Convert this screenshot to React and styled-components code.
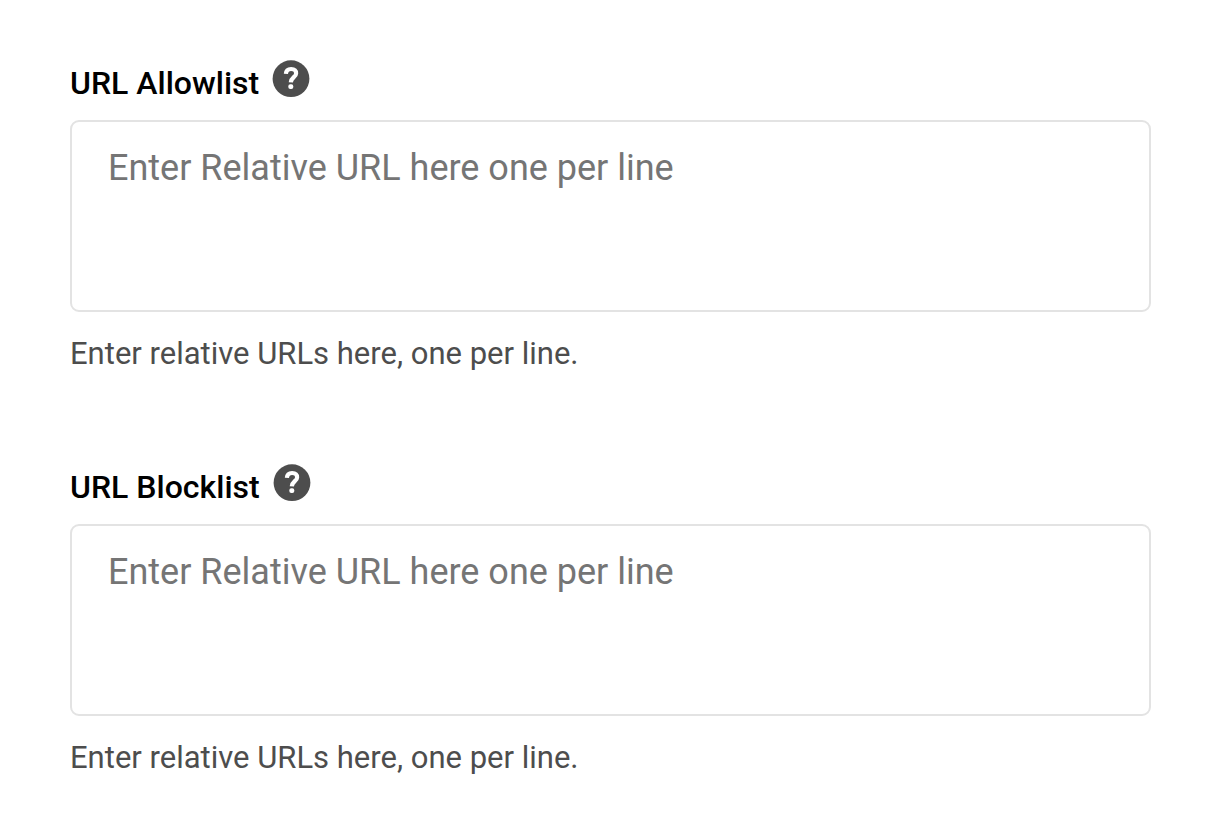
import React from "react";
import styled, { createGlobalStyle } from "styled-components";

const GlobalStyle = createGlobalStyle`
  *, *::before, *::after { box-sizing: border-box; }
  body {
    margin: 0;
    background: #ffffff;
    font-family: Roboto, "Liberation Sans", sans-serif;
  }
`;

const Form = styled.form`
  display: flex;
  flex-direction: column;
  gap: 90px;
  padding: 60px 69px 60px 70px;
`;

const Field = styled.div`
  display: flex;
  flex-direction: column;
`;

const FieldHeader = styled.div`
  display: flex;
  align-items: flex-start;
  gap: 13px;
  height: 60px;
`;

const Label = styled.label`
  padding-top: 3px;
  color: #000000;
  font-size: 32px;
  font-weight: 500;
  line-height: 40px;
`;

const HelpButton = styled.button`
  display: flex;
  padding: 0;
  border: 0;
  background: none;
  color: #4d4d4d;
  cursor: pointer;
`;

const TextArea = styled.textarea`
  display: block;
  width: 100%;
  height: 192px;
  padding: 24px 36px;
  border: 2px solid #e3e3e3;
  border-radius: 9px;
  background: #ffffff;
  color: #333333;
  font-family: inherit;
  font-size: 36px;
  line-height: 44px;
  resize: none;

  &::placeholder {
    color: #757575;
    opacity: 1;
  }
`;

const Hint = styled.p`
  margin: 22px 0 0;
  color: #4d4d4d;
  font-size: 31px;
  line-height: 40px;
`;

function HelpIcon() {
  return (
    <svg width="38" height="38" viewBox="0 0 38 38" aria-hidden="true">
      <circle cx="19" cy="18.7" r="18.4" fill="currentColor" />
      <path
        d="M13.9 13.9C14.1 10.8 16.2 9 19.1 9C22.3 9 24.1 10.7 24.1 13.4C24.1 17 19 17.4 18.8 22.3"
        fill="none"
        stroke="#ffffff"
        strokeWidth="4.2"
      />
      <rect x="16.3" y="24.3" width="5" height="4.8" rx="2" fill="#ffffff" />
    </svg>
  );
}

function UrlField({ id, label }) {
  return (
    <Field>
      <FieldHeader>
        <Label htmlFor={id}>{label}</Label>
        <HelpButton type="button" aria-label={`Help for ${label}`}>
          <HelpIcon />
        </HelpButton>
      </FieldHeader>
      <TextArea
        id={id}
        placeholder="Enter Relative URL here one per line"
        aria-describedby={`${id}-hint`}
      />
      <Hint id={`${id}-hint`}>Enter relative URLs here, one per line.</Hint>
    </Field>
  );
}

export default function App() {
  return (
    <>
      <GlobalStyle />
      <Form>
        <UrlField id="url-allowlist" label="URL Allowlist" />
        <UrlField id="url-blocklist" label="URL Blocklist" />
      </Form>
    </>
  );
}
